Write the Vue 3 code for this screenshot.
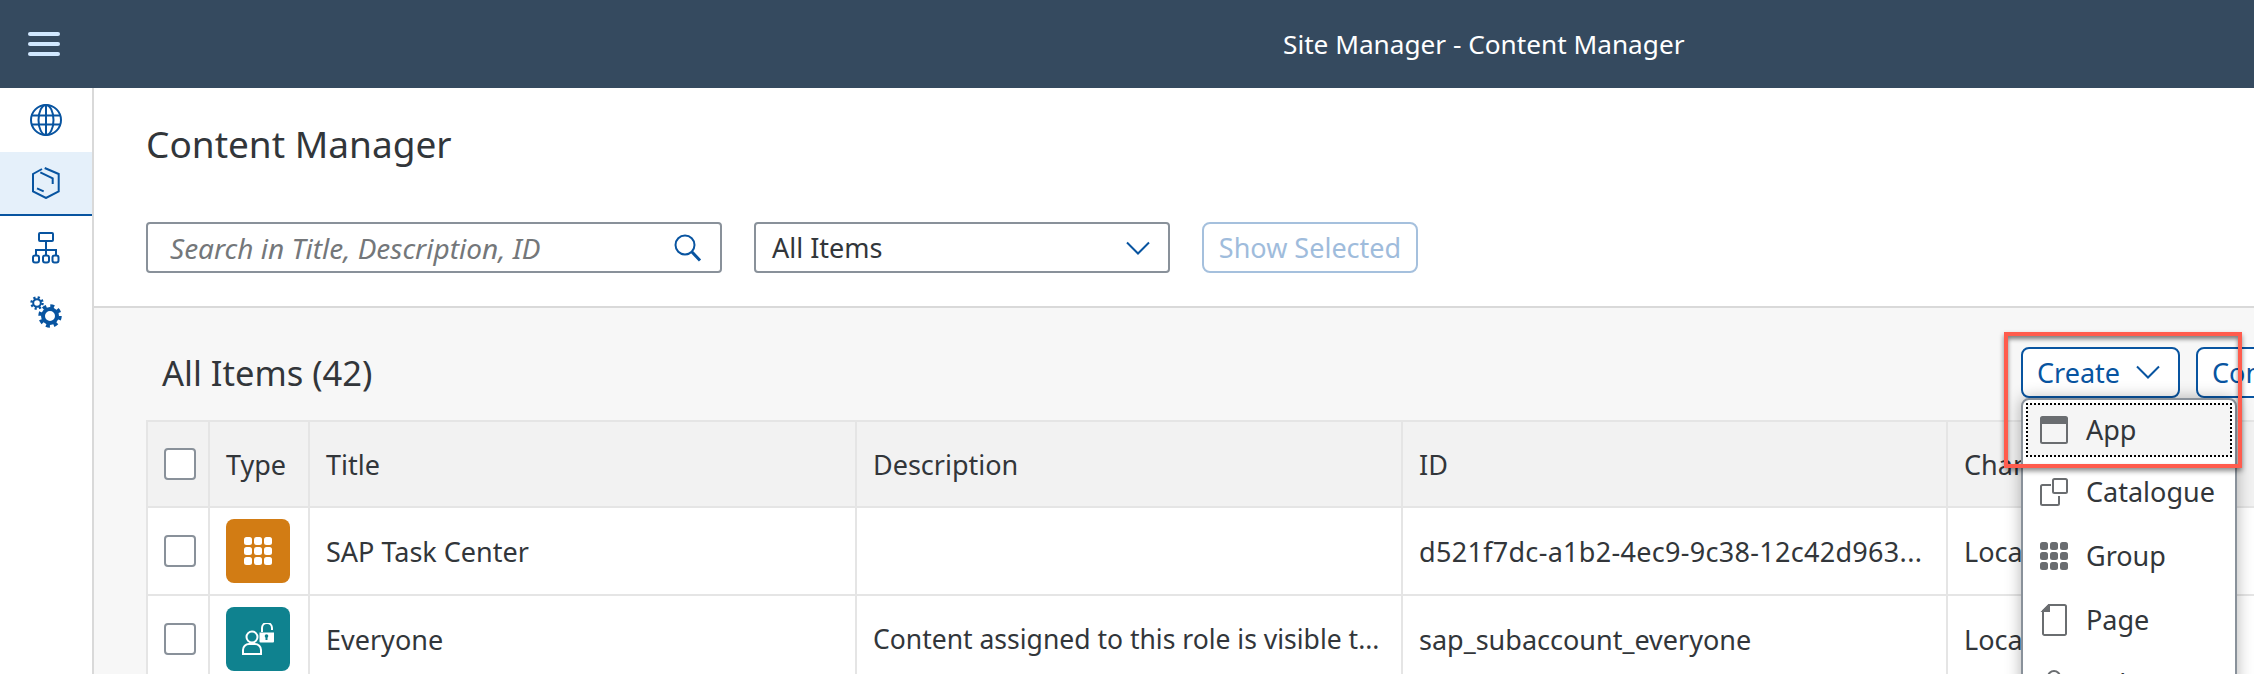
<script setup>
const sideItems = [
  { id: 'globe', active: false },
  { id: 'cube', active: true },
  { id: 'tree', active: false },
  { id: 'gears', active: false }
]

const headers = ['Type', 'Title', 'Description', 'ID', 'Chan']

const rows = [
  {
    icon: 'group',
    color: '#d27c14',
    title: 'SAP Task Center',
    description: '',
    id: 'd521f7dc-a1b2-4ec9-9c38-12c42d963...',
    hexId: true,
    channel: 'Local'
  },
  {
    icon: 'role',
    color: '#0f828f',
    title: 'Everyone',
    description: 'Content assigned to this role is visible t...',
    id: 'sap_subaccount_everyone',
    hexId: false,
    channel: 'Local'
  }
]

const menuItems = ['App', 'Catalogue', 'Group', 'Page', 'Role']

const dots = []
for (let r = 0; r < 3; r++) {
  for (let c = 0; c < 3; c++) dots.push({ x: c * 10, y: r * 10 })
}
</script>

<template>
  <div class="page">
    <header class="shell">
      <button class="burger"><span></span><span></span><span></span></button>
      <div class="shell-title">Site Manager - Content Manager</div>
    </header>

    <div class="body">
      <nav class="side">
        <div v-for="s in sideItems" :key="s.id" class="side-item" :class="{ active: s.active }">
          <svg v-if="s.id === 'globe'" width="32" height="32" viewBox="0 0 32 32" fill="none" stroke="#0854a0" stroke-width="2">
            <circle cx="16" cy="16" r="15" />
            <ellipse cx="16" cy="16" rx="7.5" ry="15" />
            <path d="M16 1v30M1.5 11.5h29M1.5 20.5h29" />
          </svg>
          <svg v-else-if="s.id === 'cube'" width="32" height="32" viewBox="0 0 32 32" fill="none" stroke="#0854a0" stroke-width="2">
            <path d="M14.700 1 28.700 7v17.300L16 31 3 24.300V7l9-5" />
            <path d="M10.300 5.300 22.700 11.300V17M7 21.300l6.700 3" />
          </svg>
          <svg v-else-if="s.id === 'tree'" width="32" height="32" viewBox="0 0 32 32" fill="none" stroke="#0854a0" stroke-width="2">
            <rect x="9" y="1" width="14" height="8" rx="1" />
            <path d="M16 9v15M6 24v-6h20v6" />
            <rect x="3" y="23.500" width="6" height="7" rx="2" />
            <rect x="13" y="23.500" width="6" height="7" rx="2" />
            <rect x="23" y="23.500" width="6" height="7" rx="2" transform="translate(-.5)" />
          </svg>
          <svg v-else width="32" height="32" viewBox="0 0 32 32" fill="none" stroke="#0854a0">
            <circle cx="7" cy="7" r="3.800" stroke-width="2" />
            <circle cx="7" cy="7" r="5.500" stroke-width="2.500" stroke-dasharray="2.160 2.160" />
            <circle cx="20" cy="20" r="7" stroke-width="4" />
            <circle cx="20" cy="20" r="10" stroke-width="3.500" stroke-dasharray="3.930 3.920" />
          </svg>
        </div>
      </nav>

      <main class="content">
        <section class="page-head">
          <h1 class="page-title">Content Manager</h1>
          <div class="filters">
            <div class="search">
              <span class="placeholder">Search in Title, Description, ID</span>
              <svg width="28" height="28" viewBox="0 0 28 28" fill="none" stroke="#0854a0">
                <circle cx="11" cy="11" r="9.500" stroke-width="2" />
                <path d="m18 18 8 8.500" stroke-width="3" />
              </svg>
            </div>
            <div class="select">
              <span>All Items</span>
              <svg class="chev" width="24" height="14" viewBox="0 0 24 14" fill="none" stroke="#0854a0" stroke-width="2">
                <path d="M1 1.500 12 12.500 23 1.500" />
              </svg>
            </div>
            <button class="btn-disabled">Show Selected</button>
          </div>
        </section>

        <section class="list">
          <div class="toolbar">
            <h2 class="list-title">All Items (42)</h2>
            <div class="create-wrap">
              <button class="btn">
                Create
                <svg class="chev" width="24" height="14" viewBox="0 0 24 14" fill="none" stroke="#0854a0" stroke-width="2">
                  <path d="M1 1.500 12 12.500 23 1.500" />
                </svg>
              </button>
              <ul class="menu">
                <li v-for="(m, i) in menuItems" :key="m" class="menu-item" :class="{ focused: i === 0 }">
                  <svg v-if="m === 'App'" width="28" height="28" viewBox="0 0 28 28" fill="none" stroke="#6a6d70" stroke-width="2">
                    <rect x="1" y="1" width="26" height="26" rx="1.500" />
                    <path d="M1 5h26" stroke-width="6" />
                  </svg>
                  <svg v-else-if="m === 'Catalogue'" width="28" height="28" viewBox="0 0 28 28" fill="none" stroke="#6a6d70" stroke-width="2">
                    <path d="M11 7H2.500A1.500 1.500 0 0 0 1 8.500v17A1.500 1.500 0 0 0 2.500 27h15a1.500 1.500 0 0 0 1.500-1.500V18" />
                    <rect x="13" y="1" width="14" height="14" rx="1.500" />
                  </svg>
                  <svg v-else-if="m === 'Group'" width="28" height="28" viewBox="0 0 28 28" fill="#6a6d70">
                    <rect v-for="d in dots" :key="d.x + '-' + d.y" :x="d.x" :y="d.y" width="8" height="8" rx="2.500" />
                  </svg>
                  <svg v-else-if="m === 'Page'" width="28" height="32" viewBox="0 0 28 32" fill="none" stroke="#6a6d70" stroke-width="2">
                    <path d="M9 1h15.500A1.500 1.500 0 0 1 26 2.500v27a1.500 1.500 0 0 1-1.500 1.500h-20A1.500 1.500 0 0 1 3 29.500V7z" />
                    <path d="M3 7h6V1z" fill="#6a6d70" />
                  </svg>
                  <svg v-else width="28" height="28" viewBox="0 0 28 28" fill="none" stroke="#6a6d70" stroke-width="2">
                    <circle cx="14" cy="7" r="6" />
                    <path d="M3 27v-3a8 8 0 0 1 8-8h6a8 8 0 0 1 8 8v3z" />
                  </svg>
                  <span>{{ m }}</span>
                </li>
              </ul>
            </div>
            <button class="btn second">Content Explorer</button>
          </div>

          <div class="table">
            <div class="cell head check"><span class="box"></span></div>
            <div v-for="h in headers" :key="h" class="cell head">{{ h }}</div>

            <template v-for="row in rows" :key="row.title">
              <div class="cell check"><span class="box"></span></div>
              <div class="cell">
                <span class="type" :style="{ background: row.color }">
                  <svg v-if="row.icon === 'group'" width="28" height="28" viewBox="0 0 28 28" fill="#fff">
                    <rect v-for="d in dots" :key="d.x + '-' + d.y" :x="d.x" :y="d.y" width="8" height="8" rx="2.500" />
                  </svg>
                  <svg v-else width="32" height="32" viewBox="0 0 32 32" fill="none" stroke="#fff" stroke-width="2">
                    <circle cx="10" cy="14" r="5.500" />
                    <path d="M1 31v-4a6 6 0 0 1 6-6h6a6 6 0 0 1 6 6v4z" />
                    <path d="M20 9V5a5 5 0 0 1 10 0v2" />
                    <path d="M17.500 9.500h14.500v9a1 1 0 0 1-1 1H18.500a1 1 0 0 1-1-1z" fill="#fff" stroke="none" />
                    <circle cx="24.500" cy="13" r="1.800" fill="#0f828f" stroke="none" />
                    <path d="M24.500 13v4" stroke="#0f828f" />
                  </svg>
                </span>
              </div>
              <div class="cell">{{ row.title }}</div>
              <div class="cell desc">{{ row.description }}</div>
              <div class="cell" :class="{ hex: row.hexId }">{{ row.id }}</div>
              <div class="cell">{{ row.channel }}</div>
            </template>
          </div>
        </section>
      </main>
    </div>

    <div class="callout"></div>
  </div>
</template>

<style>
html,
body {
  margin: 0;
  background: #fff;
}
</style>

<style scoped>
.page {
  position: relative;
  width: 2254px;
  height: 674px;
  overflow: hidden;
  display: flex;
  flex-direction: column;
  font-family: "Noto Sans", "Open Sans", sans-serif;
  font-size: 27px;
  color: #32363a;
}

.shell {
  flex: 0 0 88px;
  display: flex;
  align-items: center;
  background: #354a5f;
}

.burger {
  display: flex;
  flex-direction: column;
  gap: 6px;
  width: 32px;
  margin-left: 28px;
  padding: 0;
  border: 0;
  background: none;
}

.burger span {
  display: block;
  height: 4px;
  border-radius: 2px;
  background: #d1e8ff;
}

.shell-title {
  margin-left: 1223px;
  font-size: 26.2px;
  color: #fff;
}

.body {
  flex: 1;
  display: flex;
  min-height: 0;
}

.side {
  flex: 0 0 92px;
  border-right: 2px solid #d9d9d9;
}

.side-item {
  height: 64px;
  display: flex;
  align-items: center;
  justify-content: center;
}

.side-item.active {
  box-sizing: border-box;
  background: #e5f0fa;
  border-bottom: 2px solid #0854a0;
}

.content {
  flex: 1;
  min-width: 0;
  display: flex;
  flex-direction: column;
  background: #f7f7f7;
}

.page-head {
  flex: 0 0 220px;
  box-sizing: border-box;
  padding: 30px 0 0 52px;
  background: #fff;
  border-bottom: 2px solid #d9d9d9;
}

.page-title {
  margin: 0;
  height: 52px;
  line-height: 52px;
  font-size: 37px;
  font-weight: 400;
}

.filters {
  display: flex;
  gap: 32px;
  margin-top: 52px;
}

.search,
.select {
  box-sizing: border-box;
  height: 51px;
  display: flex;
  align-items: center;
  justify-content: space-between;
  background: #fff;
  border: 2px solid #89919a;
  border-radius: 4px;
}

.search {
  width: 576px;
  padding: 0 18px 0 22px;
}

.placeholder {
  font-size: 28px;
  font-style: italic;
  color: #74777a;
}

.select {
  width: 416px;
  padding: 0 18px 0 16px;
}

.btn-disabled {
  box-sizing: border-box;
  width: 216px;
  height: 51px;
  padding: 0;
  font: inherit;
  color: #9fbcdc;
  background: #fff;
  border: 2px solid #a5c0dd;
  border-radius: 8px;
}

.list {
  flex: 1;
  min-height: 0;
  padding: 0 0 0 52px;
}

.toolbar {
  box-sizing: border-box;
  display: flex;
  align-items: center;
  height: 112px;
  padding-top: 16px;
}

.list-title {
  flex: 0 0 1875px;
  box-sizing: border-box;
  margin: 0;
  padding-left: 16px;
  font-size: 34.5px;
  font-weight: 400;
}

.create-wrap {
  position: relative;
  flex: 0 0 auto;
}

.btn {
  box-sizing: border-box;
  display: flex;
  align-items: center;
  gap: 16px;
  height: 51px;
  padding: 0 18px 0 14px;
  font: inherit;
  white-space: nowrap;
  color: #0854a0;
  background: #fff;
  border: 2px solid #0854a0;
  border-radius: 8px;
}

.second {
  flex: 0 0 auto;
  margin-left: 16px;
}

.menu {
  position: absolute;
  top: 51px;
  left: 0;
  z-index: 2;
  box-sizing: border-box;
  width: 216px;
  margin: 0;
  padding: 0;
  list-style: none;
  background: #fff;
  border: 2px solid #89919a;
  border-radius: 8px 8px 0 0;
  box-shadow: 0 0 16px rgba(0, 0, 0, 0.3);
}

.menu-item {
  box-sizing: border-box;
  height: 64px;
  display: flex;
  align-items: center;
  gap: 18px;
  padding-left: 17px;
}

.menu-item svg {
  flex: 0 0 28px;
}

.menu-item.focused {
  height: 52px;
  margin: 4px;
  padding-left: 13px;
  background: #f5f5f5;
  outline: 2px dotted #000;
  outline-offset: -1px;
}

.table {
  display: grid;
  grid-template-columns: 62px 100px 547px 546px 545px 400px;
  width: 2200px;
  border-top: 2px solid #e5e5e5;
  border-left: 2px solid #e5e5e5;
}

.cell {
  box-sizing: border-box;
  height: 88px;
  display: flex;
  align-items: center;
  padding: 0 16px;
  white-space: nowrap;
  background: #fff;
  border-right: 2px solid #e5e5e5;
  border-bottom: 2px solid #e5e5e5;
}

.cell.head {
  height: 86px;
  background: #f2f2f2;
}

.cell.check {
  justify-content: center;
  padding: 0 0 0 4px;
}

.cell.desc {
  font-size: 26.5px;
}

.cell.hex {
  letter-spacing: 0.3px;
}

.box {
  box-sizing: border-box;
  width: 32px;
  height: 32px;
  background: #fff;
  border: 2px solid #89919a;
  border-radius: 4px;
}

.type {
  width: 64px;
  height: 64px;
  display: flex;
  align-items: center;
  justify-content: center;
  border-radius: 8px;
}

.callout {
  position: absolute;
  left: 2004px;
  top: 332px;
  z-index: 3;
  box-sizing: border-box;
  width: 238px;
  height: 136px;
  border: 4px solid #ff5c4d;
  box-shadow: 0 3px 5px rgba(0, 0, 0, 0.45), inset 0 3px 4px rgba(0, 0, 0, 0.5);
}
</style>
